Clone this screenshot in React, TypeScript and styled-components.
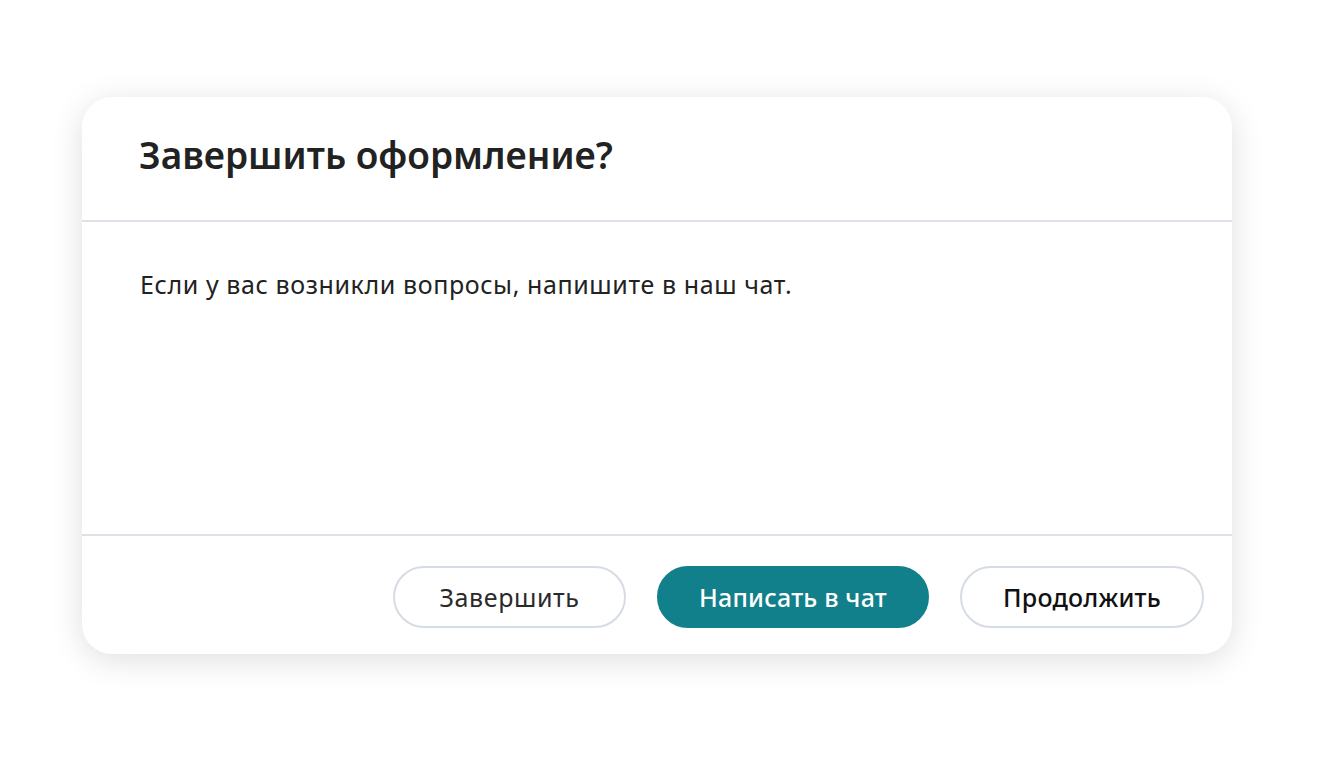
import React from "react";
import styled, { createGlobalStyle } from "styled-components";

const Global = createGlobalStyle`
  html, body { margin: 0; padding: 0; background: #ffffff; }
  body { font-family: "Noto Sans", "Open Sans", sans-serif; }
  * { box-sizing: border-box; }
`;

const Page = styled.div`
  width: 1325px;
  height: 761px;
  padding: 97px 0 0 82px;
  background: #ffffff;
`;

const Card = styled.div`
  width: 1150px;
  height: 557px;
  background: #ffffff;
  border-radius: 30px;
  box-shadow: 0 6px 32px rgba(0, 0, 0, 0.13);
  display: flex;
  flex-direction: column;
  overflow: hidden;
`;

const Header = styled.div`
  height: 125px;
  padding: 0 0 0 57px;
  display: flex;
  align-items: flex-start;
  border-bottom: 2px solid #dde2e8;
`;

const Title = styled.h2`
  margin: 0;
  padding-top: 34px;
  font-family: "Noto Sans", sans-serif;
  font-weight: 600;
  font-size: 37px;
  line-height: 48px;
  color: #222222;
`;

const Body = styled.div`
  flex: 1;
  padding: 46px 0 0 58px;
  border-bottom: 2px solid #dde2e8;
`;

const Text = styled.p`
  margin: 0;
  font-family: "Noto Sans", sans-serif;
  font-size: 25px;
  line-height: 32px;
  letter-spacing: 0.6px;
  color: #222222;
`;

const Footer = styled.div`
  height: 118px;
  display: flex;
  justify-content: flex-end;
  align-items: flex-start;
  gap: 31px;
  padding: 30px 28px 0 0;
`;

const Button = styled.button<{ $w: number; $variant: "outline" | "primary" | "strong" }>`
  width: ${(p) => p.$w}px;
  height: 62px;
  border-radius: 31px;
  font-family: "Noto Sans", sans-serif;
  font-size: 25px;
  letter-spacing: ${(p) => (p.$variant === "outline" ? "0.6px" : "0.2px")};
  cursor: pointer;
  display: flex;
  align-items: center;
  justify-content: center;
  padding: 0;
  border: 2px solid ${(p) => (p.$variant === "primary" ? "#12808a" : "#d6dce3")};
  background: ${(p) => (p.$variant === "primary" ? "#12808a" : "#ffffff")};
  color: ${(p) => (p.$variant === "primary" ? "#ffffff" : p.$variant === "strong" ? "#111111" : "#2a2a2a")};
  font-weight: ${(p) => (p.$variant === "outline" ? 400 : 500)};
`;

export default function App() {
  return (
    <>
      <Global />
      <Page>
        <Card>
          <Header>
            <Title>Завершить оформление?</Title>
          </Header>
          <Body>
            <Text>Если у вас возникли вопросы, напишите в наш чат.</Text>
          </Body>
          <Footer>
            <Button $w={233} $variant="outline">Завершить</Button>
            <Button $w={272} $variant="primary">Написать в чат</Button>
            <Button $w={244} $variant="strong">Продолжить</Button>
          </Footer>
        </Card>
      </Page>
    </>
  );
}
